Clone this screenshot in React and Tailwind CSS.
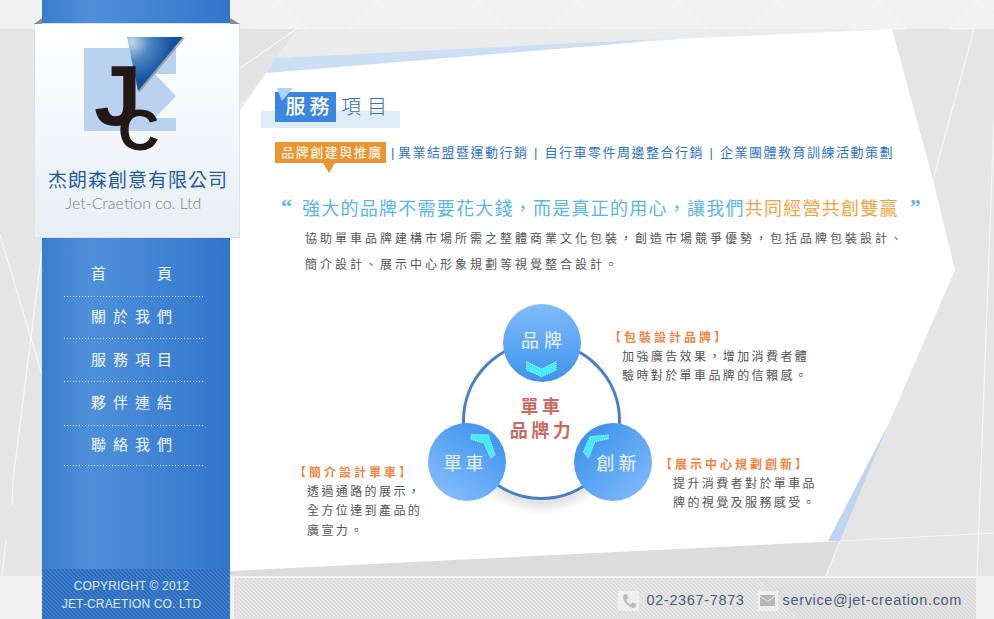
const nav = [
  { label: "關於我們", h: "h-[41px]" },
  { label: "服務項目", h: "h-[42px]" },
  { label: "夥伴連結", h: "h-[43px]" },
  { label: "聯絡我們", h: "h-[39px]" },
];

function Background() {
  const diamonds = [];
  for (let x = 78; x < 1050; x += 100) diamonds.push(x);
  return (
    <svg className="absolute inset-0" width="994" height="619" viewBox="0 0 994 619">
      <rect width="994" height="619" fill="#e5e5e5" />
      <rect width="994" height="29" fill="#f1f1f1" />
      {diamonds.map((x) => (
        <path key={x} d={`M${x - 29} 29 L${x} 0 L${x + 29} 29 Z`} stroke="#f6f6f6" strokeWidth="1" fill="#f2f2f2" />
      ))}
      <polygon points="230,29 892,29 275,58 266,73 230,125" fill="#ebebeb" />
      <polygon points="230,29 298,29 260,80 240,106 230,120" fill="#e3e3e3" />
      <polygon points="892,29 974,29 933,180 955,270 888,425 840,541 994,533 994,29" fill="#e3e3e3" />
      <polygon points="974,29 994,29 994,533 840,541 888,425 955,270 933,180" fill="#e5e5e5" />
      <polygon points="230,571 840,541 826,576 230,576" fill="#dcdcdd" />
      <rect y="576" width="994" height="43" fill="#f0f0f0" />
      <g stroke="#f8f8f8" strokeWidth="1.2" fill="none">
        <path d="M974 29 L933 180" />
        <path d="M994 120 L977 576" />
        <path d="M840 541 L994 533" />
        <path d="M840 541 L826 576" />
        <path d="M0 235 L42 375" />
        <path d="M42 250 L13 480 L12 505" />
        <path d="M6 540 L2 576" />
        <path d="M240 68 L298 28" />
      </g>
      <polygon points="230,125 266,73 275,58 892,29 933,180 955,270 888,425 840,541 230,571" fill="#ffffff" />
      <polygon points="266,73 275,58 720,36 640,42" fill="url(#strip)" />
      <polygon points="888,425 857,500 840,541 828,541" fill="#bcd5f0" />
      <defs>
        <linearGradient id="strip" x1="0" x2="1">
          <stop offset="0" stopColor="#cbdff4" />
          <stop offset="0.8" stopColor="#cbdff4" />
          <stop offset="1" stopColor="#ffffff" />
        </linearGradient>
      </defs>
    </svg>
  );
}

function Logo() {
  return (
    <svg width="110" height="120" viewBox="80 34 110 120" className="block overflow-visible">
      <defs>
        <radialGradient id="tri" cx="132" cy="42" r="50" gradientUnits="userSpaceOnUse">
          <stop offset="0" stopColor="#c4daf0" />
          <stop offset="0.35" stopColor="#4f86c4" />
          <stop offset="0.8" stopColor="#13529f" />
          <stop offset="1" stopColor="#114f9e" />
        </radialGradient>
      </defs>
      <polygon points="84,48 176,48 176,74 155,74 176,96 155,118 176,118 176,131 84,131" fill="#b8d2ef" />
      <polygon points="130,38 185,38 139,93" fill="#777" opacity="0.55" />
      <polygon points="127,37 183,37 138,91" fill="url(#tri)" />
      <text x="94" y="125" fontFamily="'Liberation Sans',sans-serif" fontWeight="700" fontSize="85" fill="#231815">J</text>
      <text x="118" y="150" fontFamily="'Liberation Sans',sans-serif" fontWeight="700" fontSize="57" fill="#231815">C</text>
    </svg>
  );
}

function Bend({ points }) {
  return (
    <svg className="absolute inset-0" width="78" height="78" viewBox="0 0 78 78">
      <polygon points={points} fill="#3feff4" stroke="#d8f6fb" strokeWidth="1" strokeDasharray="1 1" />
    </svg>
  );
}

function Callout({ pos, title, lines }) {
  return (
    <div className={`absolute ${pos}`}>
      <div className="text-[12px] leading-[19px] font-bold tracking-[3px] text-[#ef8445] -ml-[13px] whitespace-nowrap">【{title}】</div>
      {lines.map((l) => (
        <div key={l} className="text-[12px] leading-[19.4px] tracking-[2.4px] text-[#555555] whitespace-nowrap">{l}</div>
      ))}
    </div>
  );
}

function PhoneIcon() {
  return (
    <svg width="16" height="16" viewBox="0 0 24 24"><path d="M5 2 L9 2 L11 8 L8 10 C9 14 11 16 15 17 L17 14 L23 17 L22 21 C20 23 16 23 11 19 C6 15 3 11 3 6 Z" fill="#bdbdbd" /></svg>
  );
}

function MailIcon() {
  return (
    <svg width="15" height="11" viewBox="0 0 15 11"><rect width="15" height="11" fill="#b5b5b5" /><path d="M0 1 L7.5 6.5 L15 1" stroke="#efefef" strokeWidth="1" fill="none" /></svg>
  );
}

const sep = "h-px w-[140px] bg-[repeating-linear-gradient(90deg,#d7e6f7_0,#d7e6f7_1px,transparent_1px,transparent_3px)]";

export default function App() {
  return (
    <div className="relative w-[994px] h-[619px] overflow-hidden font-['Liberation_Sans','Noto_Sans_CJK_TC',sans-serif]">
      <Background />
      <div className="relative flex h-full pl-[42px]">
        {/* sidebar */}
        <aside className="relative flex w-[188px] shrink-0 flex-col bg-[linear-gradient(90deg,#3a7ccc_0%,#4f90d9_25%,#3176cc_100%)]">
          <div className="relative mt-[23px] -ml-[8px] -mr-[10px] flex h-[215px] flex-col items-center border border-[#dbe2ea] bg-[linear-gradient(180deg,#ffffff_0%,#f6f8fb_40%,#e8eef6_100%)]">
            <svg className="absolute -top-[6px] -left-px" width="206" height="6" viewBox="0 0 206 6">
              <polygon points="0,6 8,0 8,6" fill="#8d8d88" />
              <polygon points="206,6 196,0 196,6" fill="#8d8d88" />
            </svg>
            <div className="mt-[10px] -ml-[4px]"><Logo /></div>
            <div className="mt-[14px] ml-[2px] text-[19px] leading-[26px] tracking-[1px] text-[#1f5c9f] whitespace-nowrap">杰朗森創意有限公司</div>
            <div className="-mt-[1px] -ml-[7px] font-['Lato',sans-serif] text-[16px] leading-[20px] font-light text-[#7f7f7f] whitespace-nowrap">Jet-Craetion co. Ltd</div>
          </div>
          <nav className="mt-[15px] ml-[22px] flex flex-col items-start">
            <div className="ml-[27px] flex h-[43px] w-[81px] items-center justify-between text-[15px] text-[#f2f7fd]"><span>首</span><span>頁</span></div>
            <div className={sep} />
            {nav.map((n) => (
              <div key={n.label} className="contents">
                <div className={`flex ${n.h} w-[140px] items-center pl-[27px] text-[15px] tracking-[7px] text-[#f2f7fd] whitespace-nowrap`}>{n.label}</div>
                <div className={sep} />
              </div>
            ))}
          </nav>
          <div className="mt-auto flex h-[50px] flex-col items-center justify-center bg-[repeating-linear-gradient(45deg,#2d6cbc_0,#2d6cbc_1.9px,#3d7dcb_1.9px,#3d7dcb_2.83px)] pr-[9px] pt-[2px] text-[12px] leading-[18px] tracking-[0.15px] text-[#dfeaf7]">
            <div>COPYRIGHT © 2012</div>
            <div>JET-CRAETION CO. LTD</div>
          </div>
        </aside>

        {/* main */}
        <main className="flex min-w-0 flex-1 flex-col">
          <div className="flex-1 pl-[45px] pt-[92px]">
            <div className="relative flex h-[30px] items-center">
              <div className="absolute -left-[14px] top-[19px] h-[17px] w-[139px] bg-[#e0ebf8]" />
              <div className="relative flex h-[30px] w-[61px] items-center justify-center bg-[#3a86e0] pl-[8px] text-[20px] font-medium tracking-[4px] text-white">服務</div>
              <svg className="absolute -top-[4px] left-[2px]" width="17" height="14" viewBox="0 0 17 14"><polygon points="0,0 16,0 5,13" fill="#aed3fb" /></svg>
              <div className="relative ml-[5px] text-[20px] font-light tracking-[6px] text-[#3e6fb0]">項目</div>
            </div>
            <div className="mt-[20px] flex h-[21px] items-center text-[13px] tracking-[1.5px] text-[#2f74c4] whitespace-nowrap">
              <div className="relative flex h-[21px] w-[111px] items-center justify-center bg-[#e89632] pl-[3px] text-white">
                品牌創建與推廣
                <div className="absolute left-[48px] top-[21px] h-0 w-0 border-x-[6px] border-t-[10px] border-x-transparent border-t-[#e89632]" />
              </div>
              <span className="w-[12px] text-center pl-[3px]">|</span>
              <span>異業結盟暨運動行銷</span>
              <span className="w-[16px] text-center">|</span>
              <span>自行車零件周邊整合行銷</span>
              <span className="w-[16px] text-center">|</span>
              <span>企業團體教育訓練活動策劃</span>
            </div>
            <div className="mt-[33px] flex h-[26px] items-center whitespace-nowrap text-[18px] tracking-[1.25px] text-[#5bb5e5]">
              <span className="relative -top-[2px] w-[27px] pl-[6px] font-['Liberation_Serif',serif] text-[22px] leading-[24px] font-bold">“</span>
              <span>強大的品牌不需要花大錢，而是真正的用心，讓我們<span className="text-[#f0a244]">共同經營共創雙贏</span></span>
              <span className="relative -top-[2px] ml-[11px] font-['Liberation_Serif',serif] text-[22px] leading-[24px] font-bold">”</span>
            </div>
            <div className="ml-[30px] mt-[4px] text-[12px] leading-[26px] tracking-[3px] text-[#555555] whitespace-nowrap">
              <div>協助單車品牌建構市場所需之整體商業文化包裝，創造市場競爭優勢，包括品牌包裝設計、</div>
              <div>簡介設計、展示中心形象規劃等視覺整合設計。</div>
            </div>

            {/* diagram */}
            <div className="relative mt-[22px] h-[240px]">
              <div className="absolute left-[187px] top-[41px] h-[159px] w-[159px] rounded-full border-[3px] border-[#4a7fbf] shadow-[0_8px_10px_rgba(0,0,0,0.12)]" />
              <div className="absolute left-[222px] top-[95px] w-[90px] text-center text-[18px] leading-[24px] font-bold tracking-[3.5px] text-[#c96a63]">單車<br />品牌力</div>

              <div className="absolute left-[228px] top-[4px] flex h-[78px] w-[78px] flex-col items-center rounded-full bg-[linear-gradient(180deg,#80bbfd_0%,#3f93ea_100%)]">
                <div className="mt-[25px] pl-[4px] text-[18px] leading-[24px] tracking-[5px] text-[#eef6ff]">品牌</div>
                <Bend points="23.7,57.7 38.7,65 53,57.7 53,66 38.7,72.7 23.7,66" />
              </div>
              <div className="absolute left-[153px] top-[123px] flex h-[78px] w-[78px] items-center justify-center rounded-full bg-[linear-gradient(35deg,#80bbfd_15%,#4697ee_80%)]">
                <div className="mt-[4px] pr-[3px] text-[18px] leading-[24px] tracking-[4px] text-[#eef6ff]">單車</div>
                <Bend points="43.7,11.3 60.3,12 67,32 62.7,35.3 56,20.3 42.7,16" />
              </div>
              <div className="absolute left-[299px] top-[123px] flex h-[78px] w-[78px] items-center justify-center rounded-full bg-[linear-gradient(135deg,#3f93ea_15%,#7ab7fc_85%)]">
                <div className="mt-[4px] pl-[11px] text-[18px] leading-[24px] tracking-[4px] text-[#eef6ff]">創新</div>
                <Bend points="34.3,12 16,13.7 9.3,28.7 14.3,35.3 21,18.7 34.3,16" />
              </div>

              <Callout pos="left-[347px] top-[29px]" title="包裝設計品牌" lines={["加強廣告效果，增加消費者體", "驗時對於單車品牌的信賴感。"]} />
              <Callout pos="left-[398px] top-[156px]" title="展示中心規劃創新" lines={["提升消費者對於單車品", "牌的視覺及服務感受。"]} />
              <Callout pos="left-[32px] top-[164px]" title="簡介設計單車" lines={["透過通路的展示，", "全方位達到產品的", "廣宣力。"]} />
            </div>
          </div>

          <footer className="ml-[3px] mr-[18px] flex h-[42px] shrink-0 items-center justify-end gap-[13px] border-t border-l border-[#f4f4f4] bg-[repeating-linear-gradient(45deg,#dcdcdc_0,#dcdcdc_1.9px,#e8e8e8_1.9px,#e8e8e8_2.83px)] pt-[4px] pr-[14px] text-[#4a5f78] whitespace-nowrap">
            <div className="flex items-center gap-[7px] pt-[1px]">
              <span className="flex h-[20px] w-[21px] items-center justify-center bg-[#efefef]"><PhoneIcon /></span>
              <span className="text-[14.5px] tracking-[0.65px]">02-2367-7873</span>
            </div>
            <div className="flex items-center gap-[5px]">
              <span className="flex h-[20px] w-[20px] items-center justify-center bg-[#efefef]"><MailIcon /></span>
              <span className="text-[14.5px] tracking-[0.65px]">service@jet-creation.com</span>
            </div>
          </footer>
        </main>
      </div>
    </div>
  );
}
